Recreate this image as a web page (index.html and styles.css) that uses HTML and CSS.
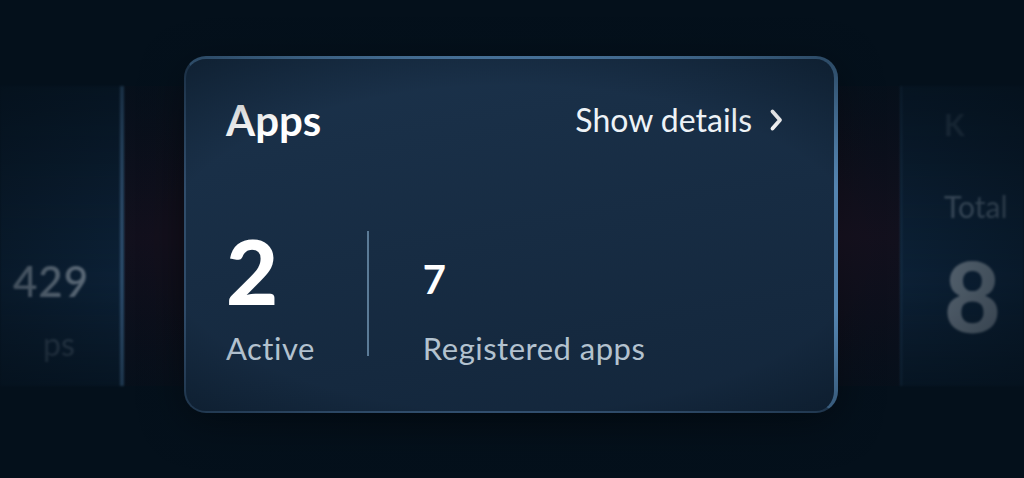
FILE: index.html
```html
<!DOCTYPE html>
<html lang="en">
<head>
    <meta charset="UTF-8">
    <title>Apps</title>
    <link rel="stylesheet" href="styles.css">
</head>
<body>
    <div class="stage">
        <!-- neighbouring card, left -->
        <div class="ghost ghost-left">
            <div class="ghost-value">429</div>
            <div class="ghost-label">ps</div>
        </div>
        <div class="gutter"></div>

        <!-- main card -->
        <div class="card">
            <div class="card-head">
                <h2>Apps</h2>
                <a class="details" href="#">Show details
                    <svg width="16" height="24" viewBox="0 0 16 24"><path d="M4.5 3.5l7.5 8.5-7.5 8.5" fill="none" stroke="#fff" stroke-width="3.8" stroke-linecap="round" stroke-linejoin="round"/></svg>
                </a>
            </div>
            <div class="stats">
                <div class="stat">
                    <div class="stat-big">2</div>
                    <div class="stat-label">Active</div>
                </div>
                <div class="divider"></div>
                <div class="stat">
                    <div class="stat-small">7</div>
                    <div class="stat-label">Registered apps</div>
                </div>
            </div>
        </div>

        <div class="gutter"></div>
        <!-- neighbouring card, right -->
        <div class="ghost ghost-right">
            <div class="ghost-title">K</div>
            <div class="ghost-sub">Total</div>
            <div class="ghost-big">8</div>
        </div>
    </div>
    <div class="vignette"></div>
</body>
</html>
```

FILE: styles.css
```css
:root {
    --bg: #04101b;
    --card-top: #1b324b;
    --card-bottom: #13263b;
    --edge: #5484b0;
    --muted: #b3c2cf;
}
body {
    margin: 0;
    height: 478px;
    overflow: hidden;
    background: var(--bg);
    font-family: 'Lato', 'Noto Sans', sans-serif;
    position: relative;
}
.stage {
    display: grid;
    grid-template-columns: 124px 60px 654px 62px 1fr;
    align-items: center;
    height: 478px;
}
.ghost {
    height: 300px;
    background: linear-gradient(180deg, rgba(20,45,72,0.3), rgba(20,48,78,0.6) 65%, rgba(20,45,72,0.3));
    filter: blur(1.2px);
}
.ghost-left {
    border-right: 4px solid rgba(80,125,170,0.55);
    box-sizing: border-box;
    margin-top: -6px;
}
.ghost-value {
    margin: 170px 0 0 13px;
    font-size: 42px;
    font-weight: 600;
    color: rgba(160,172,184,0.72);
    letter-spacing: 1px;
}
.ghost-label {
    margin: 18px 0 0 43px;
    font-size: 32px;
    color: rgba(110,125,140,0.45);
}
.ghost-right {
    border-left: 2px solid rgba(60,95,130,0.25);
    box-sizing: border-box;
    padding-left: 42px;
    margin-top: -6px;
}
.ghost-title {
    margin-top: 20px;
    font-size: 30px;
    font-weight: 700;
    color: rgba(110,125,140,0.3);
}
.ghost-sub {
    margin-top: 46px;
    font-size: 30px;
    color: rgba(130,145,160,0.55);
}
.ghost-big {
    margin-top: 22px;
    font-size: 98px;
    font-weight: 900;
    line-height: 1;
    color: rgba(150,160,170,0.7);
}
.gutter {
    height: 300px;
    margin-top: -6px;
    background: linear-gradient(180deg, rgba(25,12,24,0.2), rgba(26,16,30,0.7) 50%, rgba(25,12,24,0.2));
}
.card {
    height: 357px;
    box-sizing: border-box;
    margin-top: -10px;
    padding: 36px 50px 0 40px;
    border-radius: 22px;
    background: linear-gradient(170deg, var(--card-top), var(--card-bottom));
    border: 2px solid rgba(70,105,140,0.55);
    border-top: 3px solid var(--edge);
    border-right: 4px solid var(--edge);
    box-shadow: 0 10px 40px rgba(0,0,0,0.5);
    color: #fff;
}
.card-head {
    display: flex;
    justify-content: space-between;
    align-items: center;
}
.card-head h2 {
    margin: 0;
    font-size: 42px;
    font-weight: 700;
}
.details {
    display: flex;
    align-items: center;
    gap: 16px;
    color: #eef3f7;
    text-decoration: none;
    font-size: 32px;
}
.stats {
    display: flex;
    align-items: flex-end;
    margin-top: 80px;
}
.stat-big {
    font-size: 90px;
    font-weight: 900;
    line-height: 1;
}
.stat-small {
    font-size: 40px;
    font-weight: 700;
    line-height: 1;
    margin-bottom: 30px;
}
.stat-label {
    margin-top: 14px;
    font-size: 31px;
    letter-spacing: 0.5px;
    color: var(--muted);
}
.divider {
    width: 2px;
    height: 125px;
    margin: 6px 54px 0 52px;
    background: #5b7b97;
    align-self: flex-start;
}
.vignette {
    position: absolute;
    inset: 0;
    pointer-events: none;
    background: radial-gradient(ellipse 62% 62% at 50% 52%, rgba(4,16,27,0) 55%, rgba(4,16,27,0.85) 100%);
}
```
